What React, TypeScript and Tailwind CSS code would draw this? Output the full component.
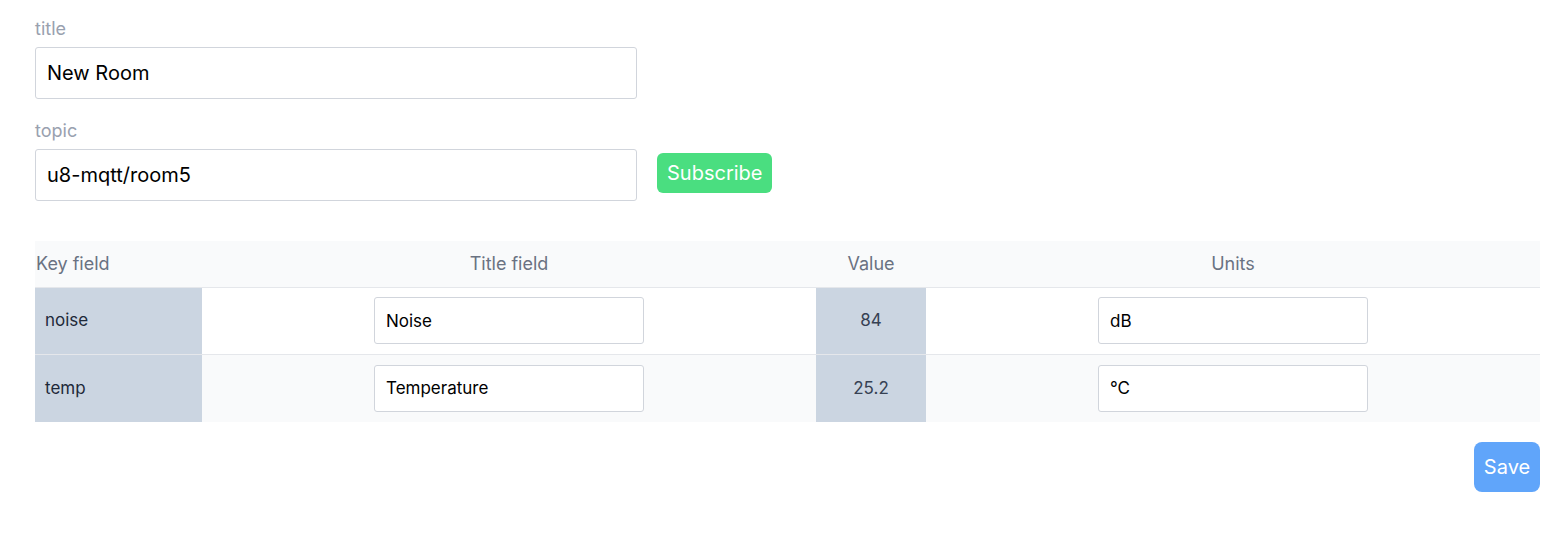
import React, { useState } from 'react';

type Row = { key: string; title: string; value: string; units: string };

const initialRows: Row[] = [
    { key: 'noise', title: 'Noise', value: '84', units: 'dB' },
    { key: 'temp', title: 'Temperature', value: '25.2', units: '°C' },
];

const Field: React.FC<{ label: string; value: string; onChange: (v: string) => void }> = ({ label, value, onChange }) => (
    <div>
        <label className="block text-[18px] leading-6 text-gray-400 mb-[6px]">{label}</label>
        <input
            value={value}
            onChange={(e) => onChange(e.target.value)}
            className="w-[602px] h-[52px] px-[11px] text-[20px] text-black border border-gray-300 rounded-[3px] outline-none"
        />
    </div>
);

const CellInput: React.FC<{ value: string; onChange: (v: string) => void }> = ({ value, onChange }) => (
    <input
        value={value}
        onChange={(e) => onChange(e.target.value)}
        className="w-[270px] h-[47px] px-[11px] text-[17px] text-black bg-white border border-gray-300 rounded-[3px] outline-none"
    />
);

export default function App() {
    const [title, setTitle] = useState('New Room');
    const [topic, setTopic] = useState('u8-mqtt/room5');
    const [rows, setRows] = useState<Row[]>(initialRows);

    const update = (i: number, field: 'title' | 'units', v: string) => {
        setRows(rows.map((r, idx) => (idx === i ? { ...r, [field]: v } : r)));
    };

    return (
        <div className="min-h-screen bg-white pl-[35px] pr-[28px] pt-[17px]" style={{ fontFamily: 'Inter, "Noto Sans", sans-serif' }}>
            <Field label="title" value={title} onChange={setTitle} />
            <div className="flex items-start gap-[20px] mt-[20px]">
                <Field label="topic" value={topic} onChange={setTopic} />
                <button className="mt-[34px] h-[40px] px-[10px] rounded-md bg-[#4ade80] text-white text-[20px]">Subscribe</button>
            </div>

            <table className="w-full mt-[40px] border-collapse table-fixed">
                <colgroup>
                    <col className="w-[167px]" />
                    <col />
                    <col className="w-[110px]" />
                    <col />
                </colgroup>
                <thead>
                    <tr className="bg-[#f9fafb] border-b border-gray-200 h-[46px] text-[18px] text-gray-500">
                        <th className="text-left font-normal pl-px">Key field</th>
                        <th className="font-normal">Title field</th>
                        <th className="font-normal">Value</th>
                        <th className="font-normal">Units</th>
                    </tr>
                </thead>
                <tbody>
                    {rows.map((r, i) => (
                        <tr key={r.key} className={`text-[17px] ${i % 2 === 1 ? 'h-[68px] bg-[#f9fafb]' : 'h-[67px] bg-white border-b border-gray-200'}`}>
                            <td className="bg-[#cbd5e1] pl-[10px] text-gray-800">{r.key}</td>
                            <td className="text-center">
                                <CellInput value={r.title} onChange={(v) => update(i, 'title', v)} />
                            </td>
                            <td className="bg-[#cbd5e1] text-center text-gray-700">{r.value}</td>
                            <td className="text-center">
                                <CellInput value={r.units} onChange={(v) => update(i, 'units', v)} />
                            </td>
                        </tr>
                    ))}
                </tbody>
            </table>

            <div className="flex justify-end mt-[20px]">
                <button className="w-[66px] h-[50px] rounded-lg bg-[#60a5fa] text-white text-[20px]">Save</button>
            </div>
        </div>
    );
}
